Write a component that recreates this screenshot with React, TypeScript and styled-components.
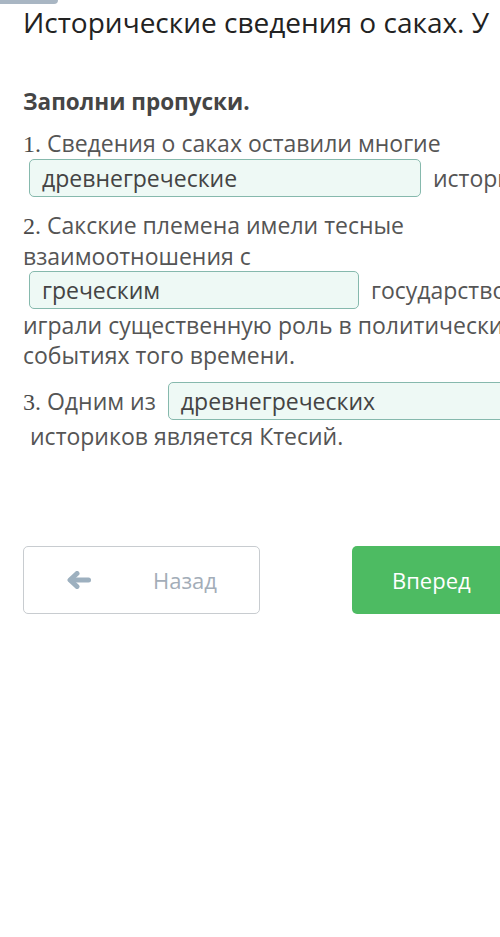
import styled, { createGlobalStyle } from 'styled-components';

const GlobalStyle = createGlobalStyle`
  html, body {
    margin: 0;
    padding: 0;
    background: #ffffff;
    overflow: hidden;
  }

  body {
    font-family: 'Open Sans', 'Noto Sans', sans-serif;
  }
`;

interface QuestionData {
  num: string;
  before: string;
  answer: string;
  blankWidth: number;
  after: string;
  tailIndent?: boolean;
}

const questions: QuestionData[] = [
  {
    num: '1.',
    before: 'Сведения о саках оставили многие',
    answer: 'древнегреческие',
    blankWidth: 392,
    after: 'историками.',
  },
  {
    num: '2.',
    before: 'Сакские племена имели тесные взаимоотношения с',
    answer: 'греческим',
    blankWidth: 330,
    after: 'государством и играли существенную роль в политических событиях того времени.',
  },
  {
    num: '3.',
    before: 'Одним из',
    answer: 'древнегреческих',
    blankWidth: 392,
    after: 'историков является Ктесий.',
    tailIndent: true,
  },
];

const ArrowLeft = () => (
  <svg width="24" height="18" viewBox="0 0 24 18">
    <polyline
      points="10,2.5 3,9 10,15.5"
      fill="none"
      stroke="#9db0bf"
      strokeWidth="5"
      strokeLinecap="round"
      strokeLinejoin="round"
    />
    <line x1="4" y1="9" x2="21.5" y2="9" stroke="#9db0bf" strokeWidth="5" strokeLinecap="round" />
  </svg>
);

const App = () => {
  return (
    <>
      <GlobalStyle />
      <Page>
        <Tab />
        <Content>
          <Title>Исторические сведения о саках. Урок 1</Title>
          <Task>Заполни пропуски.</Task>
          {questions.map((q) => (
            <Question key={q.num}>
              <Num>{q.num}</Num> {q.before} <Blank width={q.blankWidth}>{q.answer}</Blank>{' '}
              <Tail indent={q.tailIndent}>{q.after}</Tail>
            </Question>
          ))}
          <Buttons>
            <BackButton>
              <ArrowLeft />
              <span>Назад</span>
            </BackButton>
            <NextButton>Вперед</NextButton>
          </Buttons>
        </Content>
      </Page>
    </>
  );
};

const Page = styled.div`
  width: 500px;
  height: 937px;
  overflow: hidden;
  background: #ffffff;
`;

const Tab = styled.div`
  width: 58px;
  height: 4px;
  background-color: #a9b6c3;
  border-bottom-right-radius: 6px;
`;

const Content = styled.div`
  width: 566px;
  padding-left: 23px;
`;

const Title = styled.h1`
  width: 467px;
  margin: 0 0 47px;
  overflow: hidden;

  font-size: 28px;
  font-weight: 400;
  line-height: 36px;
  color: #222222;
  white-space: nowrap;
`;

const Task = styled.div`
  margin-bottom: 11px;

  font-size: 22.5px;
  font-weight: 700;
  line-height: 30px;
  color: #454545;
`;

const Question = styled.p`
  max-width: 560px;
  margin: 0 0 12px;

  font-size: 23px;
  line-height: 30px;
  color: #555555;
`;

const Num = styled.span`
  font-family: 'Liberation Serif', serif;
  font-size: 24px;
  color: #4a4a4a;
`;

const Blank = styled.span<{ width: number }>`
  display: inline-block;
  box-sizing: border-box;
  width: ${(props) => props.width}px;
  height: 38px;
  margin: 0 6px 1px 6px;
  padding: 0 12px;

  background-color: #eef9f5;
  border: 1px solid #86b9ad;
  border-radius: 5px;

  line-height: 36px;
  color: #444444;
  vertical-align: baseline;
`;

const Tail = styled.span<{ indent?: boolean }>`
  padding-left: ${(props) => (props.indent ? '7px' : '0')};
`;

const Buttons = styled.div`
  margin-top: 95px;

  display: flex;
  justify-content: space-between;
`;

const ButtonBase = styled.div`
  box-sizing: border-box;
  width: 237px;
  height: 68px;
  border-radius: 5px;

  display: flex;
  align-items: center;

  font-size: 22px;
`;

const BackButton = styled(ButtonBase)`
  padding-left: 43px;
  gap: 62px;

  border: 1px solid #c8ccd0;
  color: #a3adb8;
`;

const NextButton = styled(ButtonBase)`
  padding-left: 40px;

  background-color: #4dbb62;
  color: #ffffff;
`;

export default App;
